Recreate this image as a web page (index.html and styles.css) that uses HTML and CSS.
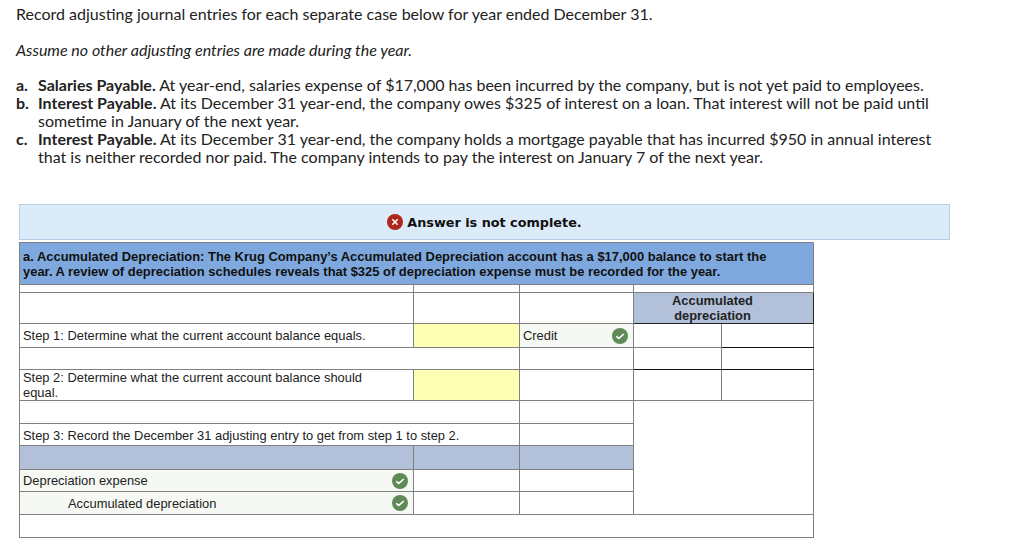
FILE: index.html
```html
<!DOCTYPE html>
<html>
    <head>
        <title>Adjusting Entries</title>
        <link rel="stylesheet" href="styles.css">
    </head>
    <body>
        <div class="question">
            <p class="intro">Record adjusting journal entries for each separate case below for year ended December 31.</p>
            <p class="assume">Assume no other adjusting entries are made during the year.</p>
            <ol class="cases">
                <li><span class="letter">a.</span><div><b>Salaries Payable.</b> At year-end, salaries expense of $17,000 has been incurred by the company, but is not yet paid to employees.</div></li>
                <li><span class="letter">b.</span><div><b>Interest Payable.</b> At its December 31 year-end, the company owes $325 of interest on a loan. That interest will not be paid until sometime in January of the next year.</div></li>
                <li><span class="letter">c.</span><div><b>Interest Payable.</b> At its December 31 year-end, the company holds a mortgage payable that has incurred $950 in annual interest that is neither recorded nor paid. The company intends to pay the interest on January 7 of the next year.</div></li>
            </ol>
        </div>

        <div class="notice">
            <svg class="icon" width="16" height="16" viewBox="0 0 16 16"><circle cx="8" cy="8" r="8" fill="#b0261c"/><path d="M5.3 5.3l5.4 5.4M10.7 5.3l-5.4 5.4" stroke="#fff" stroke-width="1.6"/></svg>
            <span>Answer is not complete.</span>
        </div>

        <table class="worksheet">
            <colgroup>
                <col class="colText"><col class="colAmount"><col class="colType"><col class="colLeft"><col class="colRight">
            </colgroup>
            <tr class="rowHeader">
                <td colspan="5" class="caption">a. Accumulated Depreciation: The Krug Company’s Accumulated Depreciation account has a $17,000 balance to start the year. A review of depreciation schedules reveals that $325 of depreciation expense must be recorded for the year.</td>
            </tr>
            <tr class="rowThin">
                <td></td><td></td><td></td><td colspan="2"></td>
            </tr>
            <tr class="rowTall">
                <td></td><td></td><td></td>
                <td colspan="2" class="tHead">Accumulated depreciation</td>
            </tr>
            <tr class="rowWide">
                <td>Step 1: Determine what the current account balance equals.</td>
                <td class="entry"></td>
                <td class="graded"><div class="gradedInner">Credit<svg class="check" width="16" height="16" viewBox="0 0 16 16"><circle cx="8" cy="8" r="8" fill="#5f8a58"/><path d="M4.3 8.3l2.5 2.1 5-4.4" fill="none" stroke="#fff" stroke-width="1.6"/></svg></div></td>
                <td></td><td class="darkLeft darkBottom"></td>
            </tr>
            <tr class="rowGap">
                <td colspan="2"></td><td></td>
                <td class="darkBottom"></td><td class="darkLeft darkBottom"></td>
            </tr>
            <tr class="rowTall">
                <td class="narrowText">Step 2: Determine what the current account balance should equal.</td>
                <td class="entry"></td>
                <td></td><td></td><td></td>
            </tr>
            <tr class="rowStd">
                <td colspan="2"></td><td></td>
                <td colspan="2" rowspan="5"></td>
            </tr>
            <tr class="rowGap">
                <td colspan="2" class="stepThree">Step 3: Record the December 31 adjusting entry to get from step 1 to step 2.</td><td></td>
            </tr>
            <tr class="rowWide">
                <td class="band"></td><td class="band"></td><td class="band"></td>
            </tr>
            <tr class="rowGap">
                <td class="graded"><div class="gradedInner">Depreciation expense<svg class="check" width="16" height="16" viewBox="0 0 16 16"><circle cx="8" cy="8" r="8" fill="#5f8a58"/><path d="M4.3 8.3l2.5 2.1 5-4.4" fill="none" stroke="#fff" stroke-width="1.6"/></svg></div></td>
                <td></td><td></td>
            </tr>
            <tr class="rowStd">
                <td class="graded"><div class="gradedInner"><span class="indent">Accumulated depreciation</span><svg class="check" width="16" height="16" viewBox="0 0 16 16"><circle cx="8" cy="8" r="8" fill="#5f8a58"/><path d="M4.3 8.3l2.5 2.1 5-4.4" fill="none" stroke="#fff" stroke-width="1.6"/></svg></div></td>
                <td></td><td></td>
            </tr>
            <tr class="rowStd">
                <td colspan="5"></td>
            </tr>
        </table>
    </body>
</html>
```

FILE: styles.css
```css
html, body {
    margin: 0;
    padding: 0;
    background-color: #fff;
}

body {
    height: 538px;
    overflow: hidden;
    color: #222;
}

.question {
    padding: 5px 80px 0px 16px;
    font-family: "Lato", sans-serif;
    font-size: 16px;
    line-height: 18px;
}

.question p {
    margin: 0px;
}

.assume {
    margin-top: 18px !important;
    font-style: italic;
}

.cases {
    list-style: none;
    margin: 17px 0px 0px 0px;
    padding: 0px;
}

.cases li {
    display: flex;
}

.letter {
    flex: 0 0 22px;
    font-weight: bold;
}

.notice {
    display: flex;
    align-items: center;
    justify-content: center;
    gap: 4px;
    box-sizing: border-box;
    width: 931px;
    height: 36px;
    margin: 38px 0px 2px 19px;
    background-color: #dcebf9;
    border: 1px solid #b5cfe8;
    font-family: "DejaVu Sans", sans-serif;
    font-size: 12.8px;
    font-weight: bold;
    color: #111;
}

.worksheet {
    border-collapse: collapse;
    table-layout: fixed;
    width: 794px;
    margin-left: 19px;
    font-family: "Liberation Sans", sans-serif;
    font-size: 12.9px;
    line-height: 15px;
    color: #222;
}

.colText { width: 394px; }
.colAmount { width: 106px; }
.colType { width: 114px; }
.colLeft { width: 88px; }
.colRight { width: 92px; }

.worksheet td {
    border: 1px solid #808080;
    padding: 0px 3px;
    vertical-align: middle;
}

.rowHeader { height: 42px; }
.rowThin { height: 8px; }
.rowTall { height: 31px; }
.rowStd { height: 23px; }
.rowGap { height: 22px; }
.rowWide { height: 24px; }

.worksheet .caption {
    background-color: #7fa9de;
    font-size: 12.95px;
    font-weight: bold;
    color: #111;
    padding: 0px 40px 0px 3px;
}

.worksheet .tHead {
    background-color: #b3c0da;
    border: 1px solid #222;
    font-weight: bold;
    text-align: center;
    padding: 0px 41px 0px 19px;
}

.worksheet .narrowText {
    padding-right: 45px;
}

.worksheet .stepThree {
    padding-top: 2px;
}

.worksheet .band {
    background-color: #b3c0da;
}

.worksheet .entry {
    background-color: #ffffb3;
}

.worksheet .graded {
    background-color: #f5f8f3;
}

.gradedInner {
    display: flex;
    align-items: center;
    justify-content: space-between;
    padding-right: 2px;
}

.indent {
    padding-left: 45px;
}

.check {
    flex: none;
}

.worksheet .darkLeft {
    border-left-color: #111;
}

.worksheet .darkBottom {
    border-bottom-color: #111;
}
```
